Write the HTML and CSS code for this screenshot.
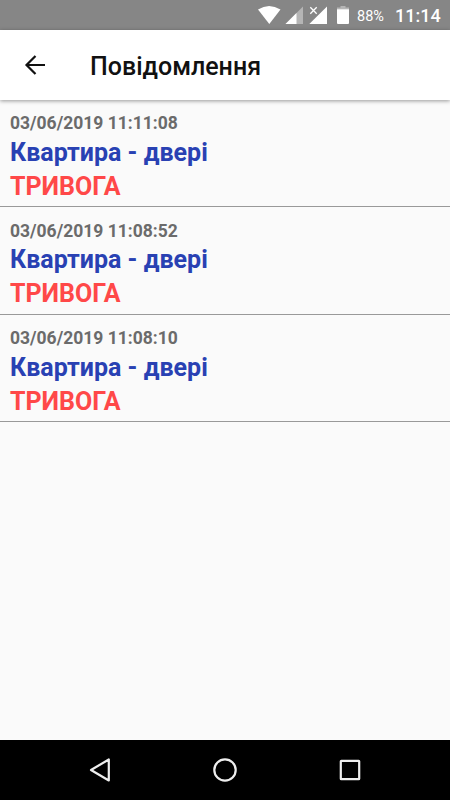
FILE: index.html
```html
<!DOCTYPE html>
<html lang="uk">
<head>
<meta charset="utf-8">
<title>Повідомлення</title>
<link rel="stylesheet" href="styles.css">
</head>
<body>
<div class="screen">
  <div class="status">
    <svg class="status-icons" width="100" height="30" viewBox="250 0 100 30">
      <path fill="#fff" d="M258 9.5Q269 2.5 280.5 9.5L269.3 24Z"/>
      <path fill="#b5b5b5" d="M303 6.5V24H285.500Z"/>
      <path fill="#fff" d="M296.500 13V24H285.500Z"/>
      <path fill="#fff" d="M327 6.500V24H309.300Z"/>
      <path stroke="#fff" stroke-width="1.300" d="M310.300 7.300l6.400 6.400m0-6.400l-6.400 6.400"/>
      <path fill="#b5b5b5" d="M340.500 6h5v1.500h3.500v2h-12v-2h3.500z"/>
      <path fill="#fff" d="M337 9.300h12V23q0 1-1 1h-10q-1 0-1-1z"/>
    </svg>
    <span class="battery">88%</span>
    <span class="clock">11:14</span>
  </div>
  <header class="bar">
    <svg class="back" width="24" height="24" viewBox="0 0 24 24"><path d="M21 12H2.500M11.500 3L2.500 12l9 9"/></svg>
    <h1 class="title">Повідомлення</h1>
  </header>
  <main class="list">
    <article class="item">
      <div class="date">03/06/2019 11:11:08</div>
      <div class="name">Квартира - двері</div>
      <div class="alarm">ТРИВОГА</div>
    </article>
    <article class="item">
      <div class="date">03/06/2019 11:08:52</div>
      <div class="name">Квартира - двері</div>
      <div class="alarm">ТРИВОГА</div>
    </article>
    <article class="item">
      <div class="date">03/06/2019 11:08:10</div>
      <div class="name">Квартира - двері</div>
      <div class="alarm">ТРИВОГА</div>
    </article>
  </main>
  <nav class="nav">
    <svg width="450" height="60" viewBox="0 740 450 60">
      <path d="M108.800 759.500v21L91 770z"/>
      <circle cx="225" cy="770" r="10.700"/>
      <rect x="340.800" y="760.800" width="18.400" height="18.400" rx=".5"/>
    </svg>
  </nav>
</div>
</body>
</html>
```
FILE: styles.css
```css
body {
  margin: 0;
  font-family: Roboto, "Noto Sans", sans-serif;
}
.screen {
  display: flex;
  flex-direction: column;
  width: 450px;
  height: 800px;
  overflow: hidden;
  background: #fafafa;
}
.status {
  display: flex;
  align-items: center;
  flex: none;
  box-sizing: border-box;
  height: 30px;
  padding-left: 250px;
  background: #868686;
  color: #fff;
  white-space: nowrap;
}
.status-icons {
  flex: none;
}
.battery {
  width: 39px;
  padding: 3px 0 0 7px;
  box-sizing: border-box;
  font-size: 14.5px;
  line-height: 18px;
}
.clock {
  margin-left: 6px;
  padding-top: 2px;
  font-size: 18px;
  line-height: 20px;
  font-weight: 500;
}
.bar {
  display: flex;
  align-items: center;
  flex: none;
  height: 70px;
  background: #fff;
  box-shadow: 0 1px 4px rgba(0, 0, 0, 0.4);
  z-index: 1;
}
.back {
  margin-left: 24px;
  fill: none;
  stroke: #111;
  stroke-width: 2.2;
}
.title {
  margin: 4px 0 0 42px;
  color: #111;
  font-size: 25px;
  line-height: 30px;
  font-weight: 500;
}
.list {
  flex: 1;
}
.item {
  box-sizing: border-box;
  height: 107.4px;
  padding: 12.3px 10px 0;
  border-bottom: 1px solid #999;
  font-weight: 700;
}
.date {
  color: #6b6b6b;
  font-size: 17.5px;
  line-height: 22px;
}
.name {
  margin-top: 1.7px;
  color: #2941b3;
  font-size: 25px;
  line-height: 34px;
}
.alarm {
  color: #ff4848;
  font-size: 25px;
  line-height: 34px;
}
.nav {
  flex: none;
  height: 60px;
  background: #000;
}
.nav svg {
  display: block;
  fill: none;
  stroke: #eee;
  stroke-width: 2.2;
  stroke-linejoin: round;
}
```
